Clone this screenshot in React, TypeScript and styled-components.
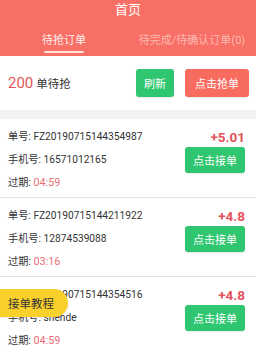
import React from "react";
import styled, { createGlobalStyle } from "styled-components";

const Global = createGlobalStyle`
  html, body { margin: 0; padding: 0; background: #f3f3f3; }
  body { font-family: Roboto, "Noto Sans CJK SC", sans-serif; width: 256px; height: 348px; overflow: hidden; }
  * { box-sizing: border-box; }
`;

const Page = styled.div`
  position: relative;
  width: 256px;
  height: 348px;
  overflow: hidden;
  background: #f3f3f3;
`;

const Header = styled.div`
  background: #f86f65;
  height: 56px;
  display: flex;
  flex-direction: column;
`;

const Title = styled.div`
  height: 20px;
  line-height: 20px;
  text-align: center;
  color: #fff;
  font-size: 13px;
`;

const Tabs = styled.div`
  display: flex;
  height: 36px;
`;

const Tab = styled.div<{ $active?: boolean }>`
  flex: 1;
  display: flex;
  flex-direction: column;
  align-items: center;
  padding-top: 13px;
  color: ${(p) => (p.$active ? "#fff0ee" : "#fcbab3")};
  font-size: 11px;
  line-height: 16px;
`;

const Underline = styled.div`
  width: 40px;
  height: 2px;
  margin-top: 2px;
  background: #fde3df;
  border-radius: 1px;
`;

const Summary = styled.div`
  background: #fff;
  height: 54px;
  display: flex;
  align-items: center;
  padding: 0 7px 0 8px;
  margin-bottom: 9px;
`;

const Count = styled.div`
  flex: 1;
  display: flex;
  align-items: baseline;
  gap: 3px;
  color: #333;
  font-size: 11.5px;
`;

const CountNum = styled.span`
  color: #e4535b;
  font-size: 15px;
`;

const Btn = styled.div<{ $color: string; $w: number; $h: number }>`
  width: ${(p) => p.$w}px;
  height: ${(p) => p.$h}px;
  background: ${(p) => p.$color};
  color: #fff;
  border-radius: 3px;
  font-size: 11px;
  display: flex;
  align-items: center;
  justify-content: center;
  box-shadow: 0 1px 1px rgba(0,0,0,0.08);
`;

const BtnGroup = styled.div`
  display: flex;
  gap: 11px;
`;

const Card = styled.div`
  background: #fff;
  height: 79px;
  display: flex;
  padding: 6px 11px 0 8px;
  border-bottom: 1px solid #e4e4e4;
`;

const Info = styled.div`
  flex: 1;
  display: flex;
  flex-direction: column;
`;

const Line = styled.div`
  height: 23px;
  line-height: 23px;
  font-size: 10.2px;
  color: #333;
  white-space: nowrap;
`;

const Time = styled.span`
  color: #ea6f76;
  font-size: 10.8px;
`;

const Side = styled.div`
  display: flex;
  flex-direction: column;
  align-items: flex-end;
  padding-top: 2px;
`;

const Price = styled.div`
  height: 20px;
  line-height: 20px;
  color: #e4535b;
  font-weight: bold;
  font-size: 13.5px;
`;

const Floating = styled.div`
  position: absolute;
  left: 0;
  top: 289px;
  width: 68px;
  height: 28px;
  background: #fad02b;
  border-radius: 0 14px 14px 0;
  color: #333;
  font-size: 11.5px;
  display: flex;
  align-items: center;
  padding-left: 8px;
  box-shadow: 0 1px 2px rgba(0,0,0,0.1);
`;

const orders = [
  { no: "FZ20190715144354987", phone: "16571012165", time: "04:59", price: "+5.01" },
  { no: "FZ20190715144211922", phone: "12874539088", time: "03:16", price: "+4.8" },
  { no: "FZ20190715144354516", phone: "shende", time: "04:59", price: "+4.8" },
];

export default function App() {
  return (
    <Page>
      <Global />
      <Header>
        <Title>首页</Title>
        <Tabs>
          <Tab $active>
            待抢订单
            <Underline />
          </Tab>
          <Tab>待完成/待确认订单(0)</Tab>
        </Tabs>
      </Header>
      <Summary>
        <Count>
          <CountNum>200</CountNum>单待抢
        </Count>
        <BtnGroup>
          <Btn $color="#2ec66f" $w={38} $h={28}>刷新</Btn>
          <Btn $color="#f86b5f" $w={64} $h={28}>点击抢单</Btn>
        </BtnGroup>
      </Summary>
      {orders.map((o, i) => (
        <Card key={i}>
          <Info>
            <Line>单号: {o.no}</Line>
            <Line>手机号: {o.phone}</Line>
            <Line>
              过期: <Time>{o.time}</Time>
            </Line>
          </Info>
          <Side>
            <Price>{o.price}</Price>
            <Btn $color="#2ec66f" $w={60} $h={26}>点击接单</Btn>
          </Side>
        </Card>
      ))}
      <Floating>接单教程</Floating>
    </Page>
  );
}
